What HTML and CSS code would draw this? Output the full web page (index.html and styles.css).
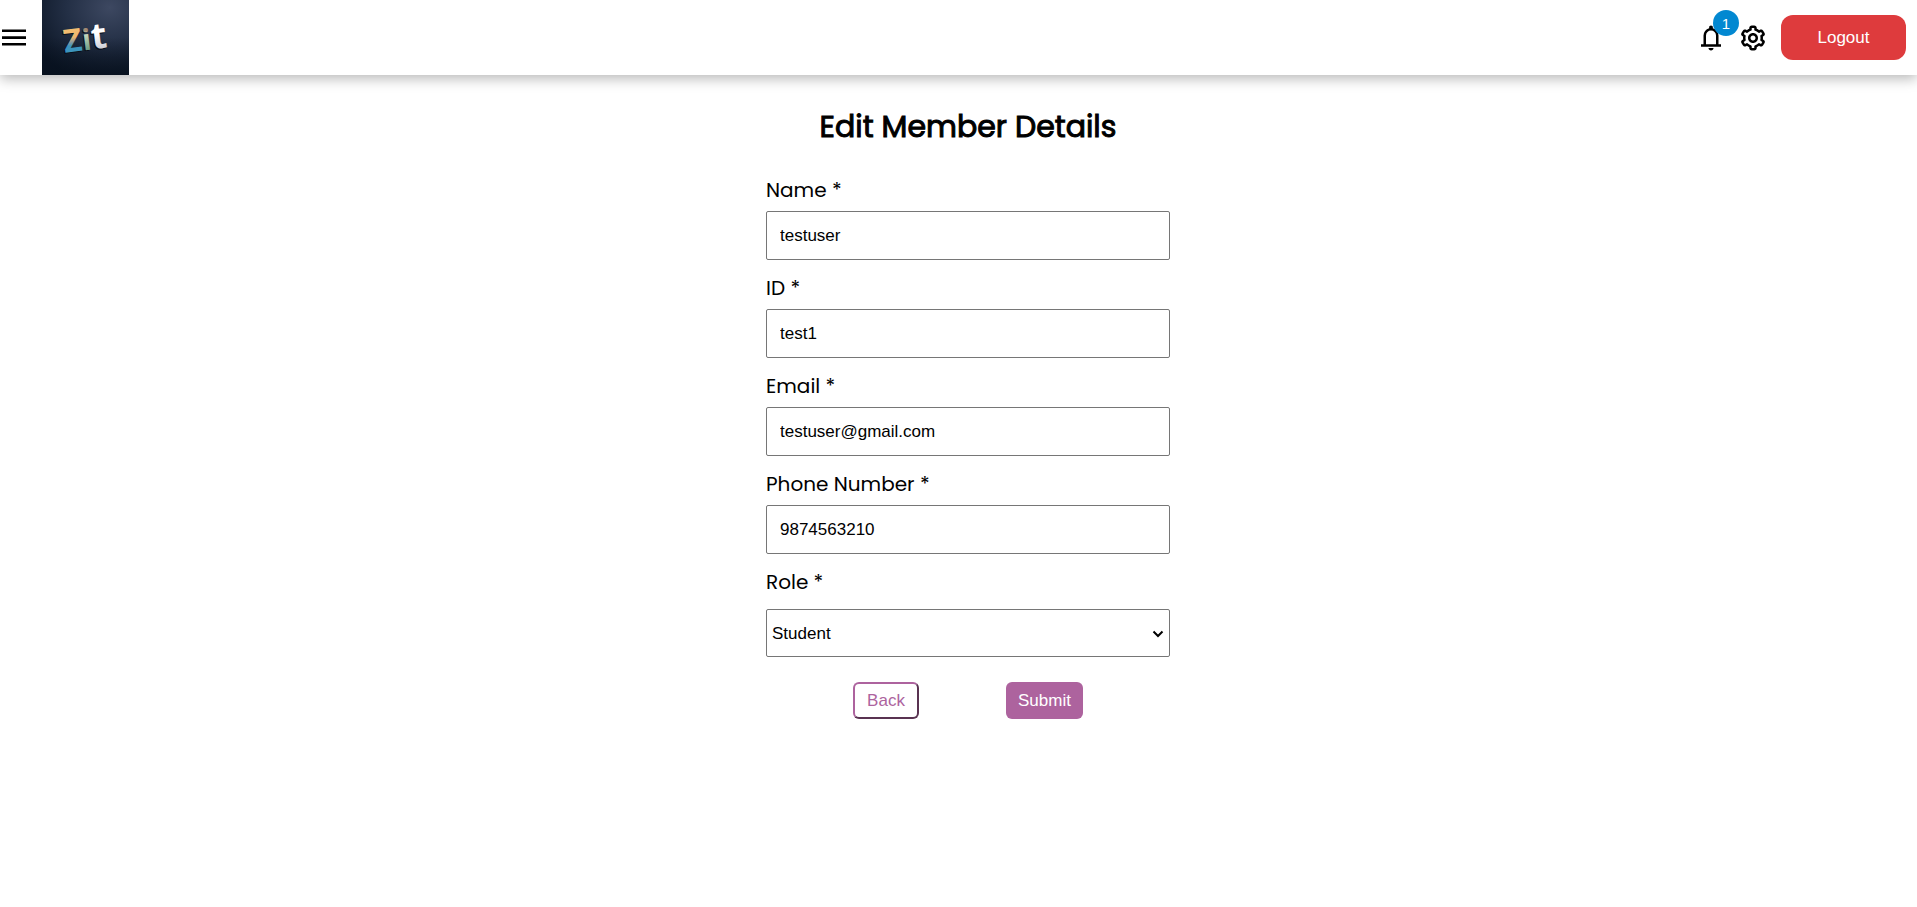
FILE: index.html
```html
<!DOCTYPE html>
<html lang="en">
<head>
<meta charset="utf-8">
<meta name="viewport" content="width=device-width, initial-scale=1">
<title>Edit Member Details</title>
<link rel="stylesheet" href="styles.css">
</head>
<body>
<header class="topbar">
  <div class="topbar-start">
    <button class="icon-button" type="button" aria-label="Menu">
      <svg class="menu-icon" viewBox="0 0 24 18" aria-hidden="true"><path d="M0 0.5h24v2.6H0zM0 7.2h24v2.8H0zM0 14h24v2.6H0z"/></svg>
    </button>
    <svg class="logo" viewBox="0 0 87 75" role="img" aria-label="Zit">
      <defs>
        <radialGradient id="night" cx="0.78" cy="0.1" r="1">
          <stop offset="0" stop-color="#3d4861"/>
          <stop offset="0.5" stop-color="#232f45"/>
          <stop offset="1" stop-color="#0b1524"/>
        </radialGradient>
        <linearGradient id="floor" x1="0" y1="0" x2="0" y2="1">
          <stop offset="0.5" stop-color="#07101d" stop-opacity="0"/>
          <stop offset="1" stop-color="#07101d" stop-opacity="0.75"/>
        </linearGradient>
        <linearGradient id="zfill" gradientUnits="userSpaceOnUse" x1="0" y1="26" x2="0" y2="50">
          <stop offset="0" stop-color="#f3be72"/>
          <stop offset="0.4" stop-color="#efb86d"/>
          <stop offset="0.6" stop-color="#8a9aa0"/>
          <stop offset="0.75" stop-color="#3c94bd"/>
        </linearGradient>
        <linearGradient id="ifill" gradientUnits="userSpaceOnUse" x1="0" y1="26" x2="0" y2="50">
          <stop offset="0.2" stop-color="#a18b74"/>
          <stop offset="0.3" stop-color="#cfdcc2"/>
          <stop offset="1" stop-color="#6d9c86"/>
        </linearGradient>
        <linearGradient id="tfill" gradientUnits="userSpaceOnUse" x1="0" y1="26" x2="0" y2="50">
          <stop offset="0.4" stop-color="#ffffff"/>
          <stop offset="1" stop-color="#cfd0d8"/>
        </linearGradient>
      </defs>
      <rect width="87" height="75" fill="url(#night)"/>
      <rect width="87" height="75" fill="url(#floor)"/>
      <g class="logo-text" transform="rotate(-7 44 38)">
        <g class="logo-shade">
          <text class="logo-z" x="20" y="51">Z</text>
          <text class="logo-i" x="39" y="51">i</text>
          <text class="logo-t" x="48" y="51">t</text>
        </g>
        <text class="logo-z" x="21" y="50" fill="url(#zfill)">Z</text>
        <text class="logo-i" x="40" y="50" fill="url(#ifill)">i</text>
        <text class="logo-t" x="49" y="50" fill="url(#tfill)">t</text>
      </g>
    </svg>
  </div>
  <div class="topbar-end">
    <div class="icon-group">
      <button class="icon-button bell" type="button" aria-label="Notifications">
        <svg class="action-icon" viewBox="0 0 24 24" aria-hidden="true"><path d="M4 19v-2h2v-7q0-2.075 1.25-3.687T10.5 4.2v-.7q0-.625.438-1.062T12 2t1.063.438T13.5 3.5v.7q2 .5 3.25 2.113T18 10v7h2v2zm8 3q-.825 0-1.412-.587T10 20h4q0 .825-.587 1.413T12 22m-4-5h8v-7q0-1.65-1.175-2.825T12 6T9.175 7.175T8 10z"/></svg>
        <span class="badge">1</span>
      </button>
      <button class="icon-button" type="button" aria-label="Settings">
        <svg class="action-icon" viewBox="0 0 24 24" aria-hidden="true"><path d="M12 16c2.206 0 4-1.794 4-4s-1.794-4-4-4-4 1.794-4 4 1.794 4 4 4zm0-6c1.084 0 2 .916 2 2s-.916 2-2 2-2-.916-2-2 .916-2 2-2z"/><path d="m2.845 16.136 1 1.73c.531.917 1.809 1.261 2.73.73l.529-.306A8.1 8.1 0 0 0 9 19.402V20c0 1.103.897 2 2 2h2c1.103 0 2-.897 2-2v-.598a8.132 8.132 0 0 0 1.896-1.111l.529.306c.923.53 2.198.188 2.731-.731l.999-1.729a2.001 2.001 0 0 0-.731-2.732l-.505-.292a7.718 7.718 0 0 0 0-2.224l.505-.292a2.002 2.002 0 0 0 .731-2.732l-.999-1.729c-.531-.92-1.808-1.265-2.731-.732l-.529.306A8.1 8.1 0 0 0 15 4.598V4c0-1.103-.897-2-2-2h-2c-1.103 0-2 .897-2 2v.598a8.132 8.132 0 0 0-1.896 1.111l-.529-.306c-.924-.531-2.2-.187-2.731.732l-.999 1.729a2.001 2.001 0 0 0 .731 2.732l.505.292a7.683 7.683 0 0 0 0 2.223l-.505.292a2.003 2.003 0 0 0-.731 2.733zm3.326-2.758A5.703 5.703 0 0 1 6 12c0-.462.058-.926.17-1.378a.999.999 0 0 0-.47-1.108l-1.123-.65.998-1.729 1.145.662a.997.997 0 0 0 1.188-.142 6.071 6.071 0 0 1 2.384-1.399A1 1 0 0 0 11 5.3V4h2v1.3a1 1 0 0 0 .708.956 6.083 6.083 0 0 1 2.384 1.399.999.999 0 0 0 1.188.142l1.144-.661 1 1.729-1.124.649a1 1 0 0 0-.47 1.108c.112.452.17.916.17 1.378 0 .461-.058.925-.171 1.378a1 1 0 0 0 .471 1.108l1.123.649-.998 1.729-1.145-.661a.996.996 0 0 0-1.188.142 6.071 6.071 0 0 1-2.384 1.399A1 1 0 0 0 13 18.7l.002 1.3H11v-1.3a1 1 0 0 0-.708-.956 6.083 6.083 0 0 1-2.384-1.399.992.992 0 0 0-1.188-.141l-1.144.662-1-1.729 1.124-.651a1 1 0 0 0 .471-1.108z"/></svg>
      </button>
    </div>
    <button class="logout" type="button">Logout</button>
  </div>
</header>
<main class="page">
  <h1 class="title">Edit Member Details</h1>
  <form class="form">
    <div class="field">
      <label class="label" for="name">Name *</label>
      <input class="control" id="name" type="text" value="testuser">
    </div>
    <div class="field">
      <label class="label" for="member-id">ID *</label>
      <input class="control" id="member-id" type="text" value="test1">
    </div>
    <div class="field">
      <label class="label" for="email">Email *</label>
      <input class="control" id="email" type="email" value="testuser@gmail.com">
    </div>
    <div class="field">
      <label class="label" for="phone">Phone Number *</label>
      <input class="control" id="phone" type="tel" value="9874563210">
    </div>
    <div class="field field-role">
      <label class="label" for="role">Role *</label>
      <div class="select-box">
        <select class="control select" id="role"><option>Student</option></select>
        <svg class="chevron" viewBox="0 0 12 8" aria-hidden="true"><path d="M1.5 1.5 6 6l4.5-4.5" fill="none" stroke="#000" stroke-width="2"/></svg>
      </div>
    </div>
    <div class="actions">
      <button class="button back" type="button">Back</button>
      <button class="button submit" type="submit">Submit</button>
    </div>
  </form>
</main>
</body>
</html>
```
FILE: styles.css
```css
* {
  box-sizing: border-box;
}

body {
  margin: 0;
  background: #fff;
  color: #000;
  font-family: Poppins, Inter, sans-serif;
}

button,
input,
select {
  font-family: Arial, "Liberation Sans", sans-serif;
  font-size: 17px;
}

.topbar {
  display: flex;
  align-items: center;
  justify-content: space-between;
  background: #fff;
  box-shadow: 0 4px 12px rgba(0, 0, 0, 0.27);
}

.topbar-start {
  display: flex;
  align-items: center;
  gap: 16px;
  padding-left: 2px;
}

.topbar-end {
  display: flex;
  align-items: center;
  gap: 13px;
  padding-right: 11px;
}

.icon-group {
  display: flex;
  gap: 12px;
}

.icon-button {
  display: block;
  padding: 0;
  border: 0;
  background: none;
}

.menu-icon {
  display: block;
  width: 24px;
  height: 18px;
}

.logo {
  display: block;
  width: 87px;
  height: 75px;
}

.logo-text {
  font-family: "Open Sans", sans-serif;
  font-weight: 700;
}

.logo-z {
  font-size: 32px;
}

.logo-i {
  font-size: 29px;
}

.logo-t {
  font-size: 36px;
}

.logo-shade {
  fill: #060c17;
}

.action-icon {
  display: block;
  width: 30px;
  height: 30px;
}

.bell {
  position: relative;
}

.badge {
  position: absolute;
  left: 17px;
  top: -13px;
  width: 26px;
  height: 26px;
  border-radius: 50%;
  background: #0288d1;
  color: #fff;
  font-size: 15px;
  line-height: 27px;
  text-align: center;
}

.logout {
  width: 125px;
  height: 45px;
  border: 0;
  border-radius: 12px;
  background: #de3b3d;
  color: #fff;
}

.page {
  display: flex;
  flex-direction: column;
  align-items: center;
  gap: 24px;
  padding: 28px 0 28px 19px;
}

.title {
  margin: 0;
  font-size: 30px;
  font-weight: 400;
  line-height: 48px;
  -webkit-text-stroke: 1px #000;
}

.form {
  display: flex;
  flex-direction: column;
  gap: 13px;
  width: 100%;
  max-width: 404px;
}

.field {
  display: flex;
  flex-direction: column;
  gap: 6px;
}

.field-role {
  gap: 12px;
}

.label {
  font-size: 20px;
  line-height: 30px;
}

.control {
  width: 100%;
  height: 49px;
  padding: 0 13px;
  border: 1px solid #767676;
  border-radius: 2px;
  background: #fff;
  color: #000;
}

.select-box {
  position: relative;
}

.select {
  display: block;
  height: 48px;
  padding: 0 5px;
  appearance: none;
}

.chevron {
  position: absolute;
  top: 21px;
  right: 6px;
  width: 12px;
  height: 8px;
  pointer-events: none;
}

.actions {
  display: flex;
  justify-content: space-evenly;
  padding-top: 12px;
}

.button {
  height: 37px;
  border-radius: 6px;
}

.back {
  padding: 0 12px;
  border: 2px outset #ad639e;
  background: #fff;
  color: #ad639e;
}

.submit {
  padding: 0 12px;
  border: 0;
  background: #ad639e;
  color: #fff;
}
```
